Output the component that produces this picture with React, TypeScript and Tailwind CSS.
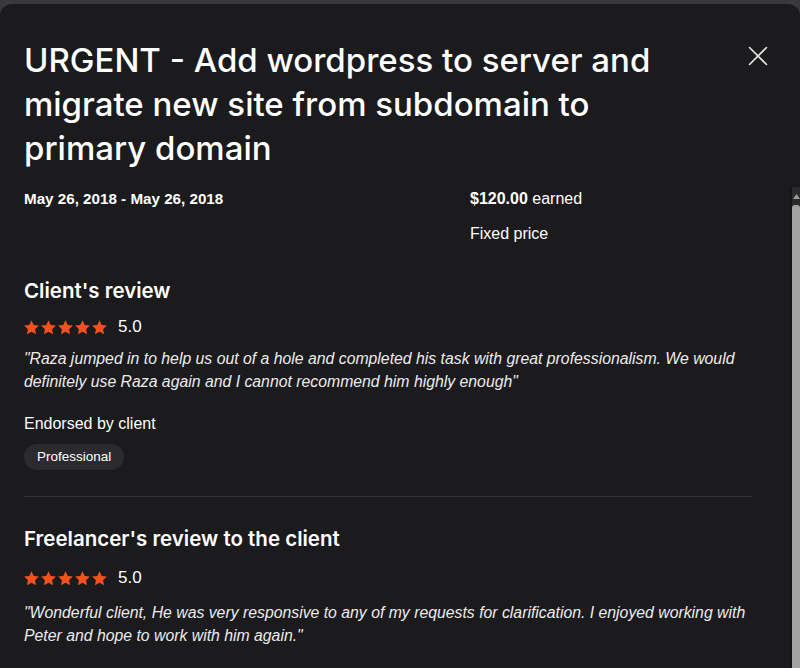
import React from "react";

const Star = () => (
  <svg width="15" height="15" viewBox="1.5 1.5 21 21" className="shrink-0">
    <path
      d="M12 1.8l3.1 6.6 7.2.9-5.3 5 1.4 7.1L12 17.9l-6.4 3.5 1.4-7.1-5.3-5 7.2-.9z"
      fill="#f4511e"
    />
  </svg>
);

const Rating = () => (
  <div className="flex items-center h-[20px]">
    <div className="flex items-center gap-[2px]">
      <Star />
      <Star />
      <Star />
      <Star />
      <Star />
    </div>
    <span className="ml-[11px] text-[17px] text-white">5.0</span>
  </div>
);

const inter = { fontFamily: 'Inter, "Liberation Sans", sans-serif' };

export default function App() {
  return (
    <div
      className="w-[800px] h-[668px] overflow-hidden bg-[#3a393c] pt-[4px]"
      style={{ fontFamily: '"Liberation Sans", Arial, sans-serif' }}
    >
      <div className="h-full rounded-t-[12px] bg-[#1b1a1d] flex flex-col">
        <div className="flex justify-between pl-6 pr-[32px] pt-[34px]">
          <h1
            className="w-[670px] text-[33px] leading-[44px] font-medium text-white"
            style={inter}
          >
            URGENT - Add wordpress to server and migrate new site from subdomain to primary domain
          </h1>
          <button className="mt-[8px] w-[20px] h-[20px] text-[#e6e6e6]">
            <svg width="20" height="20" viewBox="0 0 20 20" fill="none" stroke="currentColor" strokeWidth="1.6" strokeLinecap="round">
              <path d="M1.5 1.5l17 17M18.5 1.5l-17 17" />
            </svg>
          </button>
        </div>
        <div className="flex flex-1 mt-[17px] min-h-0">
          <div className="flex-1 pl-6 pr-[26px] pt-[2px] text-white">
            <div className="grid grid-cols-[446px_1fr]">
              <div className="text-[15.2px] leading-[20px] font-bold">May 26, 2018 - May 26, 2018</div>
              <div className="flex flex-col gap-[15px] text-[16px] leading-[20px]">
                <div>
                  <span className="font-bold">$120.00</span> earned
                </div>
                <div>Fixed price</div>
              </div>
            </div>

            <h2 className="mt-[33px] text-[20.5px] leading-[28px] font-semibold" style={inter}>
              Client's review
            </h2>
            <div className="mt-[12px]">
              <Rating />
            </div>
            <p className="mt-[10px] text-[15.8px] leading-[23px] italic text-[#ececec]">
              "Raza jumped in to help us out of a hole and completed his task with great professionalism. We would
              definitely use Raza again and I cannot recommend him highly enough"
            </p>
            <div className="mt-[21px] text-[16px] leading-[20px]">Endorsed by client</div>
            <div className="mt-[10px] flex">
              <span className="rounded-full bg-[#2b2a2e] px-[13px] h-[26px] flex items-center text-[13.5px]">
                Professional
              </span>
            </div>
            <div className="mt-[26px] mr-[12px] h-px bg-[#333236]" />

            <h2 className="mt-[28px] text-[20.5px] leading-[28px] font-semibold" style={inter}>
              Freelancer's review to the client
            </h2>
            <div className="mt-[15px]">
              <Rating />
            </div>
            <p className="mt-[13px] text-[15.8px] leading-[23px] italic text-[#ececec]">
              "Wonderful client, He was very responsive to any of my requests for clarification. I enjoyed working with
              Peter and hope to work with him again."
            </p>
          </div>
          <div className="w-[10px] flex flex-col bg-[#2a292c] border-l-2 border-[#151417]">
            <div className="h-[18px] flex items-center justify-center">
              <svg width="7" height="5" viewBox="0 0 7 5">
                <path d="M3.5 0L7 5H0z" fill="#9a9a9a" />
              </svg>
            </div>
            <div className="flex-1 rounded-t-[3px] bg-[#a3a3a3]" />
          </div>
        </div>
      </div>
    </div>
  );
}
